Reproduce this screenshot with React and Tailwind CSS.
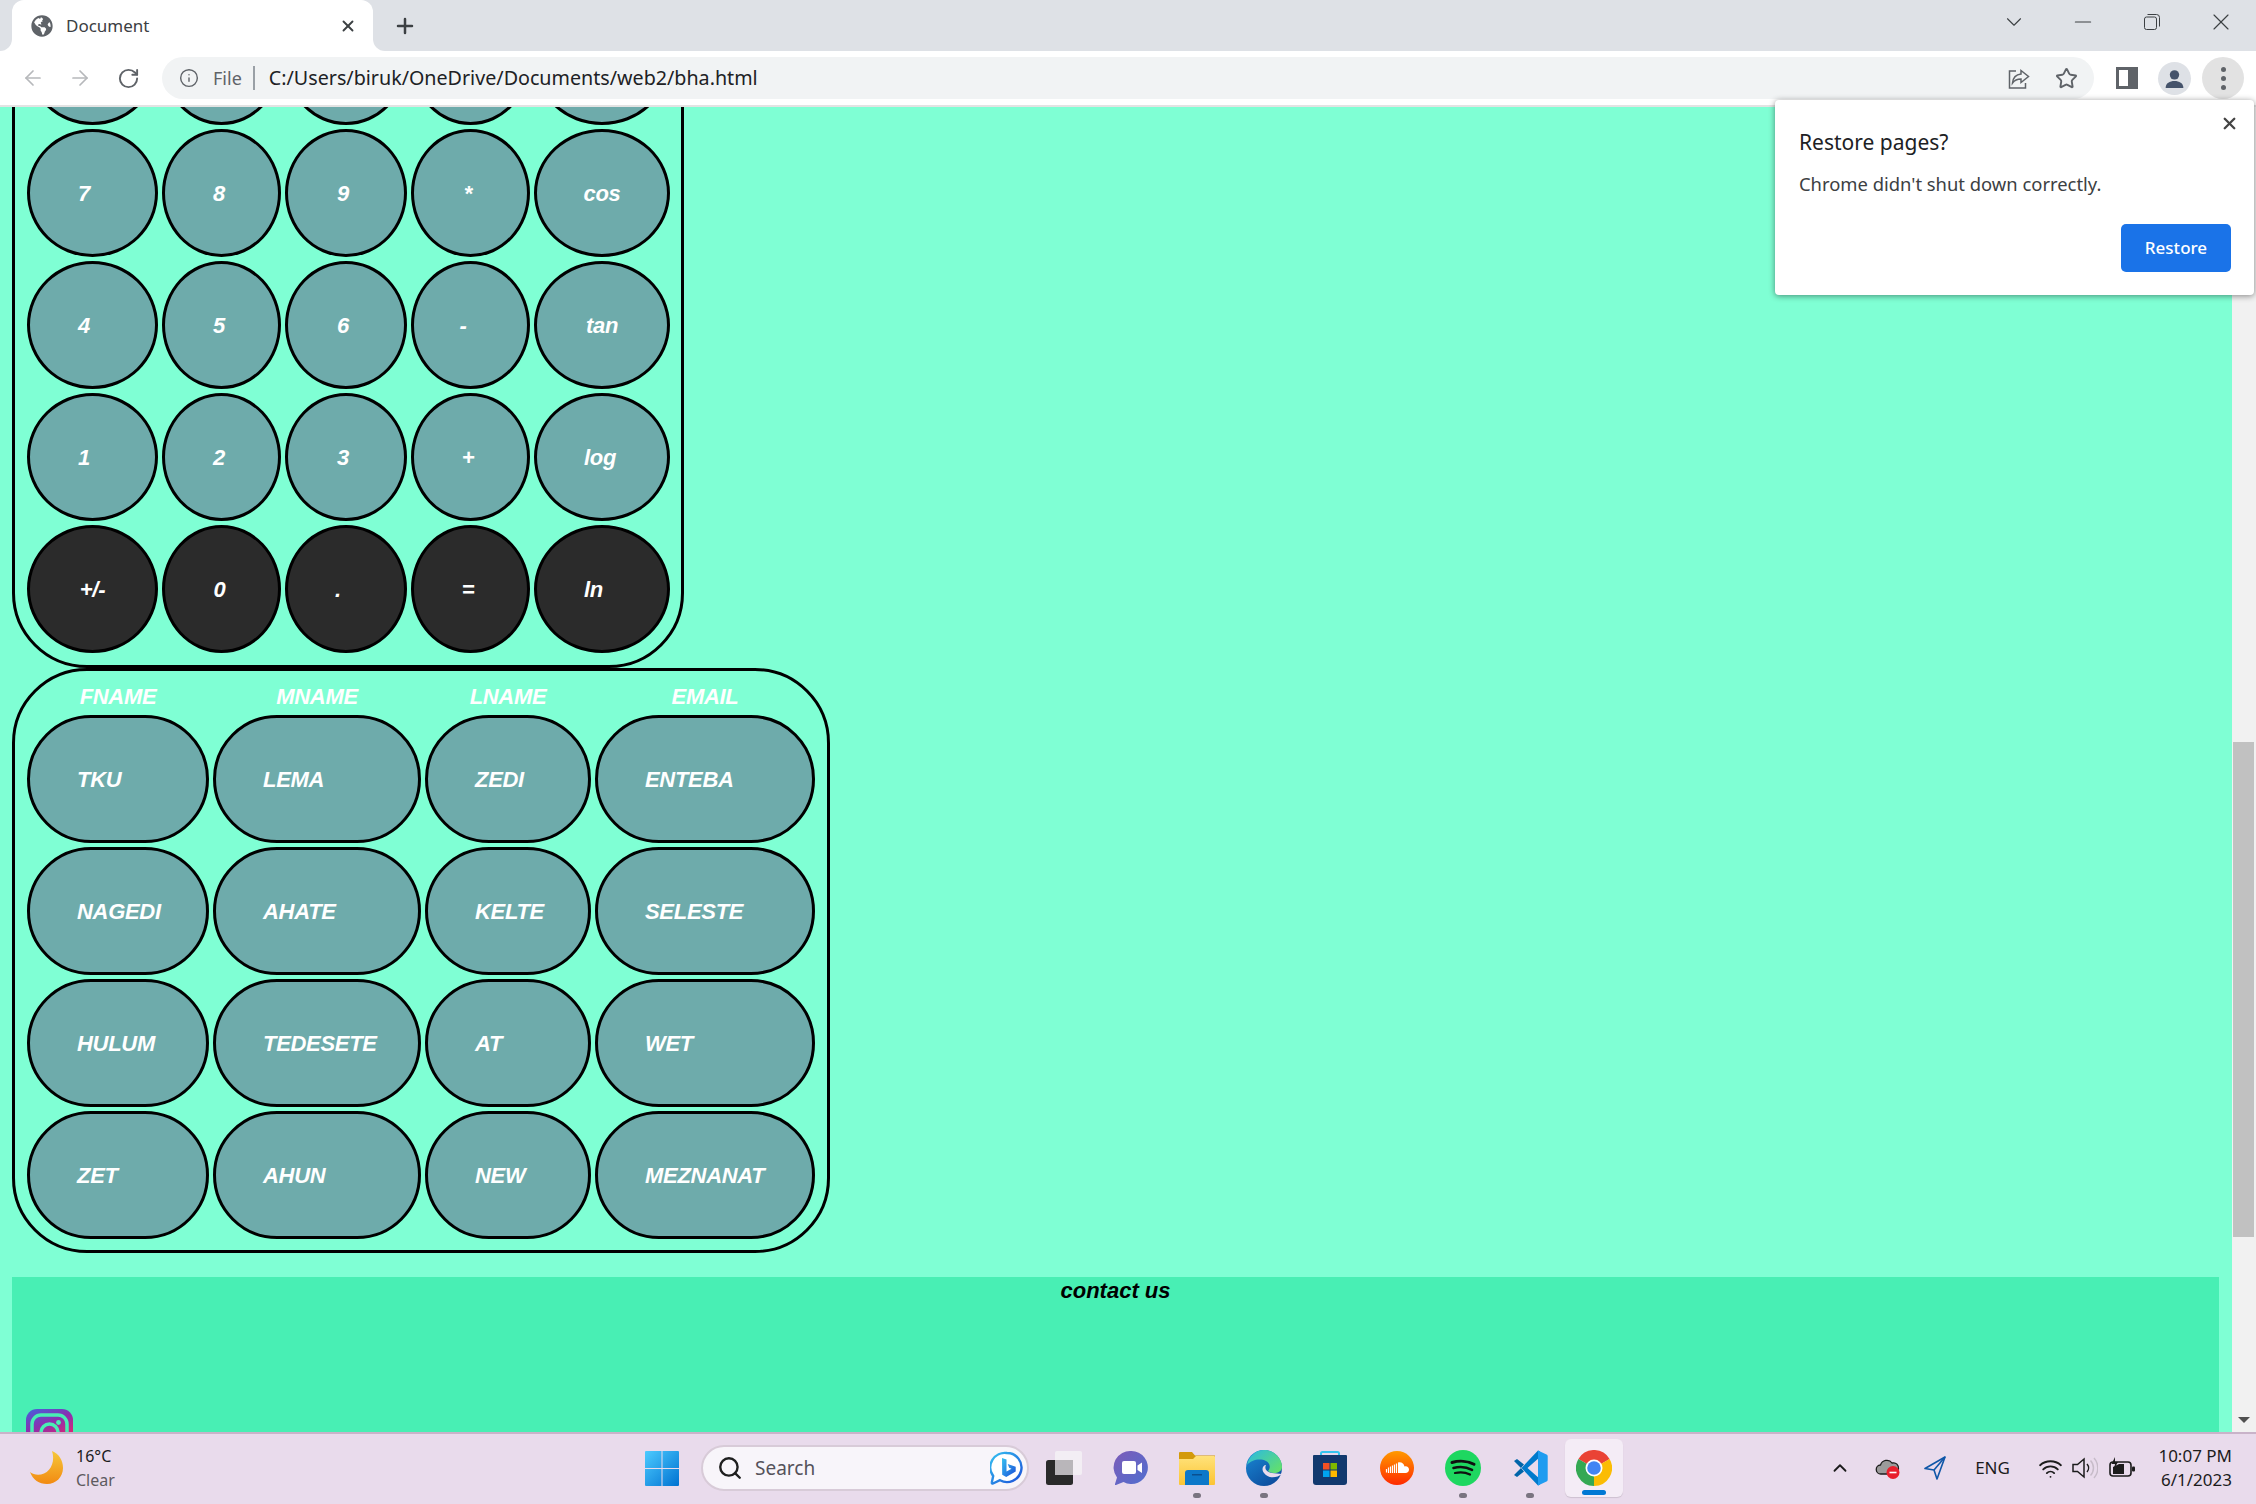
import { ArrowLeft, ArrowRight, RotateCw, Info, Star, X, Plus, ChevronDown, ChevronUp, Minus, Search, Wifi } from "lucide-react";
import { FaGlobeAmericas } from "react-icons/fa";

const calcRows = [
  [
    { label: "", cls: "" },
    { label: "", cls: "" },
    { label: "", cls: "" },
    { label: "", cls: "" },
    { label: "", cls: "" },
  ],
  [
    { label: "7", cls: "pr-[17px]" },
    { label: "8", cls: "pr-[5px]" },
    { label: "9", cls: "pr-[6px]" },
    { label: "*", cls: "pr-[5px]" },
    { label: "cos", cls: "" },
  ],
  [
    { label: "4", cls: "pr-[17px]" },
    { label: "5", cls: "pr-[5px]" },
    { label: "6", cls: "pr-[6px]" },
    { label: "-", cls: "pr-[15px]" },
    { label: "tan", cls: "" },
  ],
  [
    { label: "1", cls: "pr-[17px]" },
    { label: "2", cls: "pr-[5px]" },
    { label: "3", cls: "pr-[6px]" },
    { label: "+", cls: "pr-[5px]" },
    { label: "log", cls: "pr-[4px]" },
  ],
  [
    { label: "+/-", cls: "", dark: true },
    { label: "0", cls: "pr-[4px]", dark: true },
    { label: ".", cls: "pr-[16px]", dark: true },
    { label: "=", cls: "pr-[5px]", dark: true },
    { label: "ln", cls: "pr-[17px]", dark: true },
  ],
];

const headers = ["FNAME", "MNAME", "LNAME", "EMAIL"];
const tableRows = [
  ["TKU", "LEMA", "ZEDI", "ENTEBA"],
  ["NAGEDI", "AHATE", "KELTE", "SELESTE"],
  ["HULUM", "TEDESETE", "AT", "WET"],
  ["ZET", "AHUN", "NEW", "MEZNANAT"],
];

const pageFont = "font-['Liberation_Sans',Arial,sans-serif] font-bold italic";

const CalcKey = ({ label, cls, dark }) => (
  <div
    className={`flex h-[128px] items-center justify-center rounded-[50%] border-[3px] border-black text-[22px] tracking-[-0.3px] text-white ${
      dark ? "bg-[#2b2b2b]" : "bg-[#6eabab]"
    } ${cls}`}
  >
    {label}
  </div>
);

const Calculator = () => (
  <section className="-mt-[130px] w-[672px] rounded-b-[75px] border-[3px] border-black pt-[17px] pr-[8px] pb-[12px] pl-[12px]">
    <div className="grid grid-cols-[131px_119px_122px_119px_136px] gap-1">
      {calcRows.flat().map((key, i) => (
        <CalcKey key={i} {...key} />
      ))}
    </div>
  </section>
);

const NameTable = () => (
  <section className="w-[818px] rounded-[75px] border-[3px] border-black pr-[11px] pb-[11px] pl-[12px]">
    <div className="grid grid-cols-[182px_208px_166px_220px] gap-x-1">
      {headers.map((h) => (
        <div key={h} className="h-[44px] pt-[13px] text-center text-[22px] leading-[25px] tracking-[-0.3px] text-white">
          {h}
        </div>
      ))}
    </div>
    <div className="grid grid-cols-[182px_208px_166px_220px] gap-1">
      {tableRows.flat().map((name) => (
        <div
          key={name}
          className="flex h-[128px] items-center rounded-[64px] border-[3px] border-black bg-[#6eabab] pl-[47px] text-[22px] tracking-[-0.3px] text-white"
        >
          {name}
        </div>
      ))}
    </div>
  </section>
);

const InstagramLogo = () => (
  <svg viewBox="0 0 47 47" className="h-[47px] w-[47px]">
    <defs>
      <linearGradient id="ig" x1="0.2" y1="0" x2="0.6" y2="1">
        <stop offset="0" stopColor="#4f5bd5" />
        <stop offset="0.35" stopColor="#8a2fb0" />
        <stop offset="0.7" stopColor="#d62976" />
        <stop offset="1" stopColor="#fa7e1e" />
      </linearGradient>
    </defs>
    <rect width="47" height="47" rx="11" fill="url(#ig)" />
    <rect x="6" y="6" width="35" height="35" rx="9" fill="none" stroke="#48efb4" strokeWidth="3.5" />
    <circle cx="23.5" cy="23.5" r="8.5" fill="none" stroke="#48efb4" strokeWidth="3.5" />
    <circle cx="32.5" cy="13.5" r="2.4" fill="#48efb4" />
  </svg>
);

const TabStrip = () => (
  <div className="flex h-[51px] shrink-0 items-end bg-[#dee1e6] pl-[12px]">
    <div className="relative flex h-[51px] w-[361px] items-center rounded-t-[12px] bg-white pr-[16px] pl-[19px]">
      <div className="absolute bottom-0 -left-[12px] h-[12px] w-[12px] bg-white">
        <div className="h-full w-full rounded-br-[12px] bg-[#dee1e6]" />
      </div>
      <div className="absolute -right-[12px] bottom-0 h-[12px] w-[12px] bg-white">
        <div className="h-full w-full rounded-bl-[12px] bg-[#dee1e6]" />
      </div>
      <FaGlobeAmericas className="text-[22px] text-[#5f6368]" />
      <span className="ml-[13px] text-[17px] text-[#3c4043]">Document</span>
      <X size={18} strokeWidth={2.5} className="ml-auto text-[#3c4043]" />
    </div>
    <div className="flex h-[51px] w-[64px] items-center justify-center">
      <Plus size={24} strokeWidth={2.5} className="text-[#3c4043]" />
    </div>
    <div className="ml-auto flex h-[43px] items-center self-start pr-[1px] text-[#3c4043]">
      <div className="flex w-[69px] justify-center">
        <ChevronDown size={26} strokeWidth={1} />
      </div>
      <div className="flex w-[69px] justify-center">
        <Minus size={26} strokeWidth={1.100} />
      </div>
      <div className="flex w-[69px] justify-center">
        <svg viewBox="0 0 16 16" className="h-[16px] w-[16px]" fill="none" stroke="currentColor">
          <rect x="0.5" y="3" width="12" height="12.5" rx="2" />
          <path d="M3.5 .5h9a3 3 0 0 1 3 3v9" />
        </svg>
      </div>
      <div className="flex w-[69px] justify-center">
        <X size={28} strokeWidth={1} />
      </div>
    </div>
  </div>
);

const Toolbar = () => (
  <div className="flex h-[56px] shrink-0 items-center border-b-2 border-[#e3e3e3] bg-white">
    <div className="flex w-[162px] items-center pl-[21px]">
      <ArrowLeft size={24} strokeWidth={1.7} className="text-[#b6b8bb]" />
      <ArrowRight size={24} strokeWidth={1.7} className="ml-[23px] text-[#b6b8bb]" />
      <RotateCw size={23} strokeWidth={2} className="ml-[25px] text-[#5f6368]" />
    </div>
    <div className="flex h-[42px] w-[1932px] items-center rounded-full bg-[#f1f3f4] pl-[17px]">
      <Info size={20} strokeWidth={1.7} className="text-[#5f6368]" />
      <span className="ml-[14px] text-[18px] text-[#5f6368]">File</span>
      <div className="ml-[11px] h-[24px] w-[2px] bg-[#9aa0a6]" />
      <span className="ml-[14px] text-[19.700px] text-[#202124]">C:/Users/biruk/OneDrive/Documents/web2/bha.html</span>
      <svg viewBox="0 0 24 24" className="mr-[24px] ml-auto h-[24px] w-[24px]" fill="none" stroke="#5f6368" strokeWidth="1.5">
        <path d="M14 4.5l7.5 6-7.500 6v-3.500c-4 0-6.500 1.200-8.500 4 .5-5 3.500-8.500 8.500-9z" />
        <path d="M9 5H2.500v17h16v-5" />
      </svg>
      <Star size={23} strokeWidth={2} className="mr-[16px] text-[#5f6368]" />
    </div>
    <div className="ml-[22px] flex h-[22px] w-[22px] justify-end border-[3px] border-[#5f6368] bg-white">
      <div className="h-full w-[7px] bg-[#5f6368]" />
    </div>
    <div className="ml-[20px] flex h-[33px] w-[33px] items-center justify-center rounded-full bg-[#dee1e6]">
      <svg viewBox="0 0 24 24" className="h-[25px] w-[25px]" fill="#45536b">
        <circle cx="12" cy="8.5" r="4.5" />
        <path d="M3.500 21c0-4.500 4-6.500 8.500-6.500s8.500 2 8.500 6.500z" />
      </svg>
    </div>
    <div className="ml-[11px] flex h-[42px] w-[42px] flex-col items-center justify-center gap-[4px] rounded-full bg-[#e2e2e2]">
      <div className="h-[5px] w-[5px] rounded-full bg-[#5f6368]" />
      <div className="h-[5px] w-[5px] rounded-full bg-[#5f6368]" />
      <div className="h-[5px] w-[5px] rounded-full bg-[#5f6368]" />
    </div>
  </div>
);

const RestoreBubble = () => (
  <div className="absolute top-[100px] left-[1775px] z-10 h-[195px] w-[479px] rounded-[4px] bg-white pt-[28px] pl-[24px] font-['Noto_Sans',sans-serif] shadow-[0_1px_6px_rgba(0,0,0,0.45)]">
    <X size={19} strokeWidth={3} className="absolute top-[14px] right-[15px] text-[#444]" />
    <div className="text-[21px] leading-[28px] text-[#202124]">Restore pages?</div>
    <div className="mt-[16px] text-[18.400px] leading-[24px] text-[#3c4043]">Chrome didn't shut down correctly.</div>
    <div className="absolute top-[124px] right-[23px] flex h-[48px] w-[110px] items-center justify-center rounded-[5px] bg-[#1a73e8] text-[17px] font-medium text-white">
      Restore
    </div>
  </div>
);

const Scrollbar = () => (
  <div className="relative w-[24px] shrink-0 bg-[#f1f1f1]">
    <div className="absolute top-[635px] left-[1px] h-[495px] w-[21px] bg-[#c1c1c1]" />
    <div className="absolute bottom-[9px] left-[6px] h-0 w-0 border-x-[6px] border-t-[6px] border-x-transparent border-t-[#505050]" />
  </div>
);

const WinLogo = () => (
  <svg viewBox="0 0 34 35" className="h-[35px] w-[34px]">
    <defs>
      <linearGradient id="win" x1="0" y1="0" x2="1" y2="1">
        <stop offset="0" stopColor="#4ccbff" />
        <stop offset="1" stopColor="#0072d1" />
      </linearGradient>
    </defs>
    <path fill="url(#win)" d="M1 0h15.500v16.900H0V1a1 1 0 0 1 1-1zM17.500 0H33a1 1 0 0 1 1 1v15.900H17.500zM0 18.100h16.500V35H1a1 1 0 0 1-1-1zM17.500 18.100H34V34a1 1 0 0 1-1 1H17.500z" />
  </svg>
);

const BingLogo = () => (
  <svg viewBox="0 0 34 36" className="h-[36px] w-[34px]">
    <defs>
      <linearGradient id="bing" x1="0" y1="0" x2="1" y2="1">
        <stop offset="0" stopColor="#35c1f1" />
        <stop offset="1" stopColor="#1b4fd8" />
      </linearGradient>
    </defs>
    <path fill="#fff" stroke="url(#bing)" strokeWidth="2.400" d="M17 3a14.500 14.500 0 1 1-7 27.200L3 33.500c-.8.300-1.400-.3-1.200-1l1.400-6.500A14.500 14.500 0 0 1 17 3z" />
    <path fill="url(#bing)" d="M12 8l4.500 1.500v12l5-2.800-2.300-1-1.500-3.700 8 2.800v4.700l-9.500 5.500-4-2.200z" />
  </svg>
);

const TaskView = () => (
  <svg viewBox="0 0 36 36" className="h-[36px] w-[36px]">
    <rect x="0" y="10" width="27" height="25" rx="2.500" fill="#2a2a2a" />
    <rect x="9" y="1" width="27" height="24" rx="2" fill="#f6f4f7" opacity="0.75" />
    <rect x="9" y="10" width="18" height="15" fill="#b9b6ba" />
  </svg>
);

const MeetIcon = () => (
  <svg viewBox="0 0 36 36" className="h-[36px] w-[36px]">
    <defs>
      <linearGradient id="meet" x1="0" y1="0" x2="1" y2="1">
        <stop offset="0" stopColor="#7d5cb8" />
        <stop offset="1" stopColor="#4f6fd0" />
      </linearGradient>
    </defs>
    <path fill="url(#meet)" d="M18.500 1a16.500 16.500 0 1 1-8 31l-7.500 3c-.8.300-1.200-.2-1-1l2-6.500A16.500 16.500 0 0 1 18.500 1z" />
    <rect x="9" y="11" width="14" height="13" rx="2" fill="#fff" />
    <path fill="#fff" d="M24.500 15.500l4.500-3v10.500l-4.500-3z" />
  </svg>
);

const ExplorerIcon = () => (
  <svg viewBox="0 0 36 34" className="h-[34px] w-[36px]">
    <defs>
      <linearGradient id="folder" x1="0" y1="0" x2="0" y2="1">
        <stop offset="0" stopColor="#ffe27a" />
        <stop offset="1" stopColor="#fcc433" />
      </linearGradient>
    </defs>
    <path fill="#d39a0b" d="M1 1h12l3 3.500h20V10H0V2a1 1 0 0 1 1-1z" />
    <path fill="url(#folder)" d="M0 8h14l3-3h18a1 1 0 0 1 1 1v27a1 1 0 0 1-1 1H1a1 1 0 0 1-1-1z" />
    <path fill="#0d78c9" d="M6 22a3 3 0 0 1 3-3h18a3 3 0 0 1 3 3v12H6z" />
    <rect x="13" y="23" width="10" height="1.500" fill="#0a4f8f" />
  </svg>
);

const EdgeIcon = () => (
  <svg viewBox="0 0 36 36" className="h-[36px] w-[36px]">
    <defs>
      <linearGradient id="edgeA" x1="0" y1="0" x2="1" y2="0.800">
        <stop offset="0" stopColor="#2bb8e6" />
        <stop offset="1" stopColor="#62e06c" />
      </linearGradient>
      <linearGradient id="edgeB" x1="0" y1="0" x2="0.700" y2="1">
        <stop offset="0" stopColor="#1a8ad6" />
        <stop offset="1" stopColor="#0d4d9e" />
      </linearGradient>
    </defs>
    <circle cx="18" cy="18" r="18" fill="url(#edgeB)" />
    <path fill="url(#edgeA)" d="M18 0C28 0 36 8 36 17c0 4-4 6-8 6-3 0-5-1-6-2 3-3 2-8-2-10C14 8 5 10 1 15 3 6 10 0 18 0z" />
    <path fill="#e9dbec" d="M36 24c-5 4-14 5-18-1-3-4-1-8 2-8-2 4 1 7 6 8 3 .5 6 .5 10 1z" />
  </svg>
);

const StoreIcon = () => (
  <svg viewBox="0 0 36 36" className="h-[36px] w-[36px]">
    <path fill="none" stroke="#35c5f0" strokeWidth="2" d="M9 8V3.500a1.500 1.500 0 0 1 1.500-1.500h15A1.500 1.500 0 0 1 27 3.500V8" />
    <path fill="#12396e" d="M2 5h32a1 1 0 0 1 1 1v26a3 3 0 0 1-3 3H4a3 3 0 0 1-3-3V6a1 1 0 0 1 1-1z" />
    <rect x="11" y="13" width="6.500" height="6.500" fill="#f25022" />
    <rect x="18.500" y="13" width="6.500" height="6.500" fill="#7fba00" />
    <rect x="11" y="20.500" width="6.500" height="6.500" fill="#00a4ef" />
    <rect x="18.500" y="20.500" width="6.500" height="6.500" fill="#ffb900" />
  </svg>
);

const SoundCloudIcon = () => (
  <svg viewBox="0 0 34 34" className="h-[34px] w-[34px]">
    <defs>
      <linearGradient id="sc" x1="0" y1="0" x2="0" y2="1">
        <stop offset="0" stopColor="#ff9a00" />
        <stop offset="1" stopColor="#ff2a00" />
      </linearGradient>
    </defs>
    <circle cx="17" cy="17" r="17" fill="url(#sc)" />
    <path fill="#fff" d="M18 11.500c3.500-.8 6 1.200 6.500 4 2.500-.8 4.500 1 4.500 3s-1.500 3.500-3.500 3.500H18z" />
    <path fill="none" stroke="#fff" strokeWidth="1.200" d="M16.500 12.500V22M14.500 13.500V22M12.500 14.500V22M10.500 15.500V22M8.500 16.500V22M6.500 18V21.500" />
  </svg>
);

const SpotifyIcon = () => (
  <svg viewBox="0 0 36 36" className="h-[36px] w-[36px]">
    <circle cx="18" cy="18" r="18" fill="#1ed760" />
    <g fill="none" stroke="#101010" strokeLinecap="round">
      <path strokeWidth="3" d="M7 12.500c7-2 16-1.500 22 1.800" />
      <path strokeWidth="2.600" d="M8.500 18c6-1.600 13-1 18.500 1.800" />
      <path strokeWidth="2.200" d="M10 23c5-1.200 10.500-.8 15 1.500" />
    </g>
  </svg>
);

const VsCodeIcon = () => (
  <svg viewBox="0 0 36 36" className="h-[36px] w-[36px]">
    <path fill="#0065a9" d="M2 11l3-2 7 5.500L9 18zM2 25l3 2 7-5.500L9 18z" />
    <path fill="#007acc" d="M26 0.500 9.500 18 26 35.500l2-1V29L15.500 18 28 7V1.500z" />
    <path fill="#1f9cf0" d="M26 0.500l8.500 4c.8.400 1.200 1 1.200 2v23c0 1-.4 1.600-1.200 2l-8.500 4z" />
  </svg>
);

const ChromeIcon = () => (
  <svg viewBox="0 0 36 36" className="h-[36px] w-[36px]">
    <path fill="#ea4335" d="M18 18 2.400 9A18 18 0 0 1 33.600 9z" />
    <path fill="#fbbc04" d="M18 18 33.600 9A18 18 0 0 1 18 36z" />
    <path fill="#34a853" d="M18 18V36A18 18 0 0 1 2.400 9z" />
    <circle cx="18" cy="18" r="8.500" fill="#fff" />
    <circle cx="18" cy="18" r="6.800" fill="#4285f4" />
  </svg>
);

const Dot = () => <div className="absolute bottom-[-1px] h-[5px] w-[8px] rounded-full bg-[#7a7480]" />;

const taskbarApps = [
  { key: "taskview", Icon: TaskView },
  { key: "meet", Icon: MeetIcon },
  { key: "explorer", Icon: ExplorerIcon, running: true },
  { key: "edge", Icon: EdgeIcon, running: true },
  { key: "store", Icon: StoreIcon },
  { key: "soundcloud", Icon: SoundCloudIcon },
  { key: "spotify", Icon: SpotifyIcon, running: true },
  { key: "vscode", Icon: VsCodeIcon, running: true },
];

const Taskbar = () => (
  <div className="flex h-[72px] shrink-0 items-center border-t-2 border-[#c9b3c9] bg-[#e9dbec] pb-[2px] font-['Noto_Sans',sans-serif]">
    <div className="flex w-[645px] shrink-0 items-center pl-[30px]">
      <svg viewBox="0 0 34 34" className="h-[34px] w-[34px]">
        <defs>
          <linearGradient id="moon" x1="0" y1="0" x2="0" y2="1">
            <stop offset="0" stopColor="#f6c83a" />
            <stop offset="1" stopColor="#f28a12" />
          </linearGradient>
        </defs>
        <path fill="url(#moon)" d="M22 0c7 3 11 9 11 17 0 9-7 16-16 16C9 33 3 29 0 21c4 3 9 3.500 14 1.500C22 19 25 9 22 0z" />
      </svg>
      <div className="ml-[12px] text-[16px] leading-[24px]">
        <div className="text-[#1c1c1c]">16°C</div>
        <div className="text-[#5d5a60]">Clear</div>
      </div>
    </div>
    <WinLogo />
    <div className="ml-[22px] flex h-[46px] w-[328px] items-center rounded-full border-2 border-[#d8cbd8] bg-[#f8f5fa] pr-[3px] pl-[14px]">
      <Search size={26} strokeWidth={2.200} className="text-[#1f1f1f]" />
      <span className="ml-[12px] text-[19px] text-[#55525a]">Search</span>
      <div className="ml-auto">
        <BingLogo />
      </div>
    </div>
    <div className="w-[2px]" />
    {taskbarApps.map(({ key, Icon, running }) => (
      <div key={key} className="relative flex h-[58px] w-[66.500px] items-center justify-center">
        <Icon />
        {running && <Dot />}
      </div>
    ))}
    <div className="relative ml-[2px] flex h-[58px] w-[58px] items-center justify-center rounded-[6px] bg-[#f4ecf6] shadow-[0_1px_1px_rgba(0,0,0,0.12)]">
      <ChromeIcon />
      <div className="absolute bottom-[2px] h-[5px] w-[24px] rounded-full bg-[#0078d4]" />
    </div>
    <div className="ml-auto flex items-center pr-[24px] text-[#1c1c1c]">
      <div className="flex w-[48px] justify-center">
        <ChevronUp size={22} strokeWidth={2} />
      </div>
      <div className="flex w-[47px] justify-center">
        <svg viewBox="0 0 26 22" className="h-[22px] w-[26px]">
          <path fill="#9b9b9b" stroke="#1c1c1c" strokeWidth="1.300" d="M6 17a4.500 4.500 0 0 1-.5-9C7 3 14 1.500 17 6c4-1 7 2 6.500 6l-4 5z" />
          <circle cx="18" cy="15.500" r="6.500" fill="#e81f2d" />
          <rect x="14.500" y="14.700" width="7" height="1.600" fill="#fff" />
        </svg>
      </div>
      <div className="flex w-[48px] justify-center">
        <svg viewBox="0 0 22 24" className="h-[24px] w-[22px]" fill="none" stroke="#0f57a8" strokeWidth="1.600" strokeLinejoin="round">
          <path d="M21 1 1 12.500l9 1.500 3 9z" />
          <path d="M21 1 10 14" />
        </svg>
      </div>
      <div className="flex w-[68px] justify-center pr-[1px] text-[17px]">ENG</div>
      <div className="ml-[5px] flex w-[36px] justify-center">
        <Wifi size={25} strokeWidth={1.800} />
      </div>
      <div className="flex w-[34px] justify-center">
        <svg viewBox="0 0 26 24" className="h-[24px] w-[26px]" fill="none" stroke="currentColor" strokeWidth="1.500">
          <path d="M1 8.500h4.500L12 3v18l-6.500-5.500H1z" />
          <path d="M15 8a6 6 0 0 1 0 8" />
          <path stroke="#c7bcc9" d="M18.500 4.500a11 11 0 0 1 0 15M22 2a15 15 0 0 1 0 20" />
        </svg>
      </div>
      <div className="flex w-[40px] justify-center">
        <svg viewBox="0 0 26 22" className="h-[22px] w-[26px]">
          <rect x="1" y="5" width="21" height="14" rx="3" fill="none" stroke="currentColor" strokeWidth="1.600" />
          <rect x="23" y="9.500" width="3" height="5" rx="1" fill="currentColor" />
          <path fill="currentColor" d="M4 17V10l6-3h5v10z" />
          <path fill="currentColor" d="M6 0 2.500 7H6l-1 5 4-7H6z" />
        </svg>
      </div>
      <div className="w-[90px] text-right text-[17px] leading-[24px]">
        <div>10:07 PM</div>
        <div>6/1/2023</div>
      </div>
    </div>
  </div>
);

export default function App() {
  return (
    <div className="relative flex h-[1504px] w-[2256px] flex-col overflow-hidden bg-[#7fffd4] font-['Noto_Sans',sans-serif]">
      <TabStrip />
      <Toolbar />
      <main className="flex min-h-0 flex-1 overflow-hidden">
        <div className={`min-w-0 flex-1 pr-[13px] pl-[12px] ${pageFont}`}>
          <Calculator />
          <NameTable />
          <footer className="mt-6 h-[200px] bg-[#48efb4]">
            <div className="pt-[1px] text-center text-[22px] leading-[25px] text-black">contact us</div>
            <div className="mt-[106px] ml-[14px]">
              <InstagramLogo />
            </div>
          </footer>
        </div>
        <Scrollbar />
      </main>
      <Taskbar />
      <RestoreBubble />
    </div>
  );
}
